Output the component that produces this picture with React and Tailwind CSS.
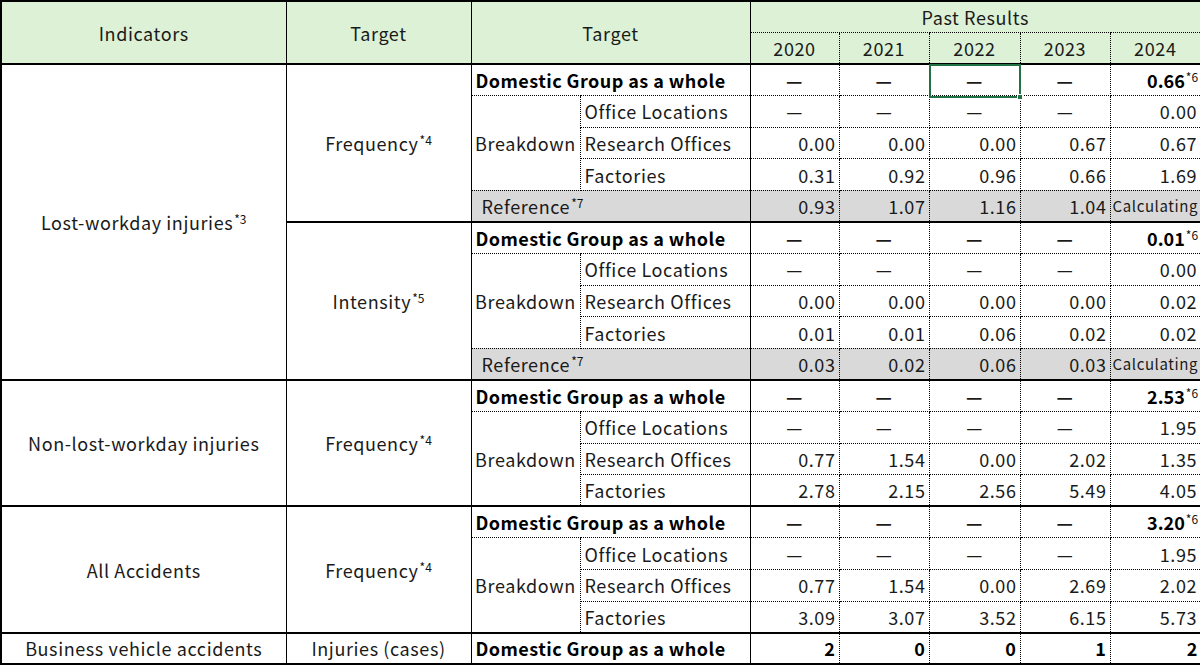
import React from "react";

const cell = "border border-dotted border-black p-0 leading-none";
const solidCol = "border border-solid border-black p-0 leading-none";

const Sup = ({ n }) => (
  <sup className="text-[12px] font-normal ml-[1px] text-[#111] tracking-normal">*{n}</sup>
);

const DashBold = () => <span className="font-bold">—</span>;
const Dash = () => <span>—</span>;

const groups = [
  {
    indicator: "Lost-workday injuries",
    indicatorNote: 3,
    parts: [
      {
        target: "Frequency",
        note: 4,
        whole: "0.66",
        rows: [
          ["Office Locations", null, null, null, null, "0.00"],
          ["Research Offices", "0.00", "0.00", "0.00", "0.67", "0.67"],
          ["Factories", "0.31", "0.92", "0.96", "0.66", "1.69"],
        ],
        reference: ["0.93", "1.07", "1.16", "1.04"],
      },
      {
        target: "Intensity",
        note: 5,
        whole: "0.01",
        rows: [
          ["Office Locations", null, null, null, null, "0.00"],
          ["Research Offices", "0.00", "0.00", "0.00", "0.00", "0.02"],
          ["Factories", "0.01", "0.01", "0.06", "0.02", "0.02"],
        ],
        reference: ["0.03", "0.02", "0.06", "0.03"],
      },
    ],
  },
  {
    indicator: "Non-lost-workday injuries",
    parts: [
      {
        target: "Frequency",
        note: 4,
        whole: "2.53",
        rows: [
          ["Office Locations", null, null, null, null, "1.95"],
          ["Research Offices", "0.77", "1.54", "0.00", "2.02", "1.35"],
          ["Factories", "2.78", "2.15", "2.56", "5.49", "4.05"],
        ],
      },
    ],
  },
  {
    indicator: "All Accidents",
    parts: [
      {
        target: "Frequency",
        note: 4,
        whole: "3.20",
        rows: [
          ["Office Locations", null, null, null, null, "1.95"],
          ["Research Offices", "0.77", "1.54", "0.00", "2.69", "2.02"],
          ["Factories", "3.09", "3.07", "3.52", "6.15", "5.73"],
        ],
      },
    ],
  },
];

const rowH = "h-[31.6px]";
const years = ["2020", "2021", "2022", "2023", "2024"];

function Part({ group, part, first, span }) {
  const top = "border-t-2 [border-top-style:solid]";
  return (
    <>
      <tr className={rowH}>
        {first && (
          <td rowSpan={span} className={`${solidCol} border-t-2 text-center`}>
            {group.indicator}
            {group.indicatorNote && <Sup n={group.indicatorNote} />}
          </td>
        )}
        <td
          rowSpan={part.reference ? 5 : 4}
          className={`${solidCol} border-t-2 text-center`}
        >
          {part.target}
          <Sup n={part.note} />
        </td>
        <td colSpan={2} className={`${cell} ${top} [border-right-style:solid] pl-[4px] font-bold text-black tracking-[0.45px]`}>
          Domestic Group as a whole
        </td>
        {[0, 1, 2, 3].map((i) => (
          <td key={i} className={`${cell} ${top} text-center relative`}>
            <DashBold />
            {first && group.indicatorNote && part.target === "Frequency" && i === 2 && (
              <div className="absolute -left-[1px] -top-[1px] w-[92px] h-[34px] border-2 border-[#217346]">
                <div className="absolute -right-[4px] -bottom-[4px] w-[6px] h-[6px] bg-[#217346] border border-white" />
              </div>
            )}
          </td>
        ))}
        <td className={`${cell} ${top} text-right pr-[2px] font-bold text-black tracking-normal`}>
          {part.whole}
          <Sup n={6} />
        </td>
      </tr>
      {part.rows.map((r, ri) => (
        <tr key={ri} className={rowH}>
          {ri === 0 && (
            <td rowSpan={3} className={`${cell} text-center`}>
              Breakdown
            </td>
          )}
          <td className={`${cell} [border-right-style:solid] pl-[4px]`}>{r[0]}</td>
          {r.slice(1).map((v, vi) => (
            <td
              key={vi}
              className={`${cell} ${v ? "text-right pr-[3px]" : "text-center"} ${vi === 4 ? "pr-[2px]" : ""}`}
            >
              {v ?? <Dash />}
            </td>
          ))}
        </tr>
      ))}
      {part.reference && (
        <tr className={`${rowH} bg-[#d9d9d9]`}>
          <td colSpan={2} className={`${cell} [border-right-style:solid] pl-[10px]`}>
            Reference
            <Sup n={7} />
          </td>
          {part.reference.map((v, vi) => (
            <td key={vi} className={`${cell} text-right pr-[3px]`}>
              {v}
            </td>
          ))}
          <td className={`${cell} text-right pr-[2px] text-[15px]`}>Calculating</td>
        </tr>
      )}
    </>
  );
}

export default function App() {
  return (
    <div className="w-[1200px] h-[666px] bg-white overflow-hidden font-['Noto_Sans_CJK_JP','Noto_Sans',sans-serif] text-[18px] text-[#1a1a1a] tracking-[0.6px]">
      <table className="w-[1200px] table-fixed border-collapse border-2 border-solid border-black">
        <colgroup>
          <col className="w-[285px]" />
          <col className="w-[185px]" />
          <col className="w-[109px]" />
          <col className="w-[170px]" />
          <col className="w-[89px]" />
          <col className="w-[90px]" />
          <col className="w-[91px]" />
          <col className="w-[90px]" />
          <col className="w-[91px]" />
        </colgroup>
        <thead className="bg-[#dcf1d5]">
          <tr className="h-[31px]">
            <th rowSpan={2} className={`${solidCol} border-b-2 font-normal`}>
              Indicators
            </th>
            <th rowSpan={2} className={`${solidCol} border-b-2 font-normal`}>
              Target
            </th>
            <th colSpan={2} rowSpan={2} className={`${solidCol} border-b-2 font-normal`}>
              Target
            </th>
            <th colSpan={5} className={`${cell} font-normal`}>
              Past Results
            </th>
          </tr>
          <tr className="h-[32px]">
            {years.map((y) => (
              <th key={y} className={`${cell} border-b-2 [border-bottom-style:solid] font-normal`}>
                {y}
              </th>
            ))}
          </tr>
        </thead>
        <tbody>
          {groups.map((g, gi) => {
            const span = g.parts.reduce((s, p) => s + (p.reference ? 5 : 4), 0);
            return g.parts.map((p, pi) => (
              <Part key={`${gi}-${pi}`} group={g} part={p} first={pi === 0} span={span} />
            ));
          })}
          <tr className={rowH}>
            <td className={`${solidCol} border-t-2 text-center`}>Business vehicle accidents</td>
            <td className={`${solidCol} border-t-2 text-center`}>Injuries (cases)</td>
            <td colSpan={2} className={`${cell} border-t-2 [border-top-style:solid] [border-right-style:solid] pl-[4px] font-bold text-black tracking-[0.45px]`}>
              Domestic Group as a whole
            </td>
            {["2", "0", "0", "1", "2"].map((v, i) => (
              <td
                key={i}
                className={`${cell} border-t-2 [border-top-style:solid] text-right ${i === 4 ? "pr-[2px]" : "pr-[3px]"} font-bold text-black`}
              >
                {v}
              </td>
            ))}
          </tr>
        </tbody>
      </table>
    </div>
  );
}
